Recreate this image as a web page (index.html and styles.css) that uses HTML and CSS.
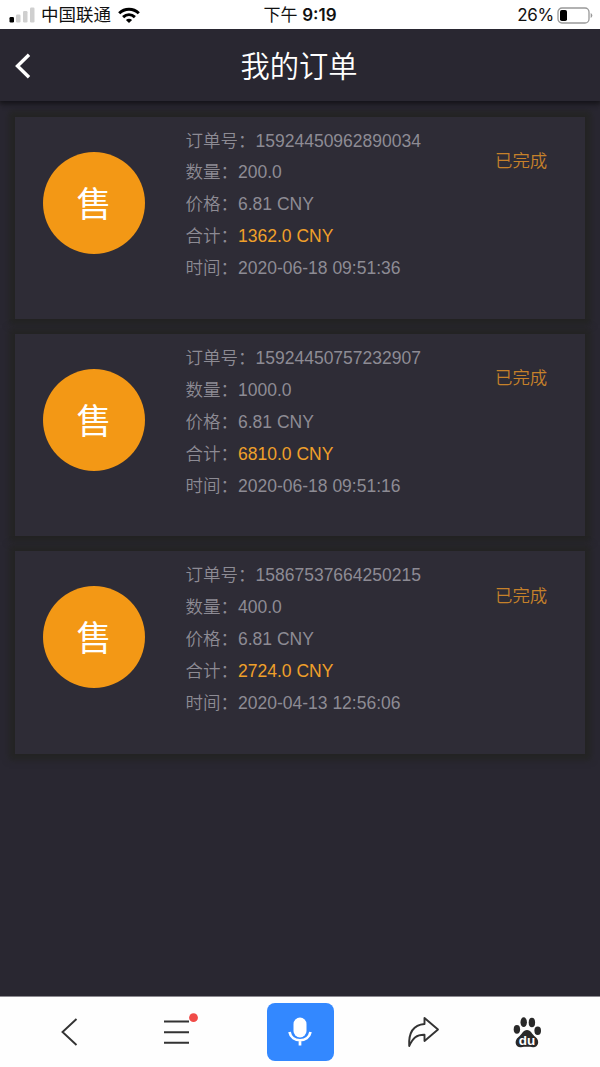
FILE: index.html
```html
<!DOCTYPE html>
<html lang="zh-CN">
<head>
<meta charset="utf-8">
<title>我的订单</title>
<link rel="stylesheet" href="styles.css">
</head>
<body>
<div class="statusbar">
  <div class="carrier">
    <svg class="signal" width="26" height="16" viewBox="0 0 26 16"><rect x="0.500" y="10" width="4.500" height="5.500" rx="1.200" fill="#000"/><g fill="#cfcfcf"><rect x="7" y="7.500" width="4.500" height="8" rx="1.200"/><rect x="14" y="4" width="4.500" height="11.500" rx="1.200"/><rect x="21" y="0.500" width="4.500" height="15" rx="1.200"/></g></svg>
    <span class="carrier-name">中国联通</span>
    <svg class="wifi" width="22" height="16" viewBox="0 0 22 16" fill="none" stroke="#000" stroke-width="3"><path d="M1.200 6.200C6.700 .8 15.300 .8 20.800 6.200"/><path d="M5.100 10.200c3.500-3.200 8.300-3.200 11.800 0"/><path d="M11 16l-3.100-3.100c1.800-1.700 4.400-1.700 6.200 0z" fill="#000" stroke="none"/></svg>
  </div>
  <div class="clock">下午 <b>9:19</b></div>
  <div class="power">
    <span class="percent">26%</span>
    <svg width="36" height="17" viewBox="0 0 36 17"><rect x="1" y="1" width="31" height="15" rx="4" fill="#fff" stroke="#999" stroke-width="1.300"/><rect x="3" y="3" width="7" height="11" rx="1.800" fill="#000"/><path d="M33.700 6v5q1.600-.7 1.600-2.500T33.700 6z" fill="#999"/></svg>
  </div>
</div>
<header class="header">
  <svg class="back" width="18" height="28" viewBox="0 0 18 28"><path d="M16 2.800 4.500 14 16 25.200" fill="none" stroke="#fff" stroke-width="3.400"/></svg>
  <h1 class="title">我的订单</h1>
</header>
<main class="orders">
  <article class="card">
    <div class="side"><div class="badge">售</div></div>
    <div class="details">
      <p>订单号：15924450962890034</p><p>数量：200.0</p><p>价格：6.81 CNY</p><p>合计：<span class="total">1362.0 CNY</span></p><p>时间：2020-06-18 09:51:36</p>
    </div>
    <div class="state">已完成</div>
  </article>
  <article class="card">
    <div class="side"><div class="badge">售</div></div>
    <div class="details">
      <p>订单号：15924450757232907</p><p>数量：1000.0</p><p>价格：6.81 CNY</p><p>合计：<span class="total">6810.0 CNY</span></p><p>时间：2020-06-18 09:51:16</p>
    </div>
    <div class="state">已完成</div>
  </article>
  <article class="card">
    <div class="side"><div class="badge">售</div></div>
    <div class="details">
      <p>订单号：15867537664250215</p><p>数量：400.0</p><p>价格：6.81 CNY</p><p>合计：<span class="total">2724.0 CNY</span></p><p>时间：2020-04-13 12:56:06</p>
    </div>
    <div class="state">已完成</div>
  </article>
</main>
<nav class="toolbar">
  <div class="tool"><svg width="36" height="36" viewBox="0 0 36 36"><path d="M25.500 5 11.500 18l14 13" fill="none" stroke="#333" stroke-width="1.900"/></svg></div>
  <div class="tool"><svg class="menu" width="40" height="36" viewBox="0 0 40 36"><path d="M7 7.500h25M7 18.200h25M7 28.800h25" fill="none" stroke="#333" stroke-width="1.900"/><circle cx="36.500" cy="3.700" r="4.400" fill="#f04b48"/></svg></div>
  <div class="tool"><div class="mic"><svg width="26" height="32" viewBox="0 0 26 32"><rect x="6.500" y="1.500" width="13" height="20" rx="6.500" fill="#fff"/><path d="M2.500 16C4.500 27 21.500 27 23.500 16M13 24v5.500" fill="none" stroke="#fff" stroke-width="2.700"/></svg></div></div>
  <div class="tool"><svg width="36" height="36" viewBox="0 0 36 36"><path d="M19.500 4 33 15.500 19.500 27v-6.300C11.500 20.500 8 24 4.200 32 3.500 19.500 8 11 19.500 10z" fill="none" stroke="#333" stroke-width="1.900" stroke-linejoin="round"/></svg></div>
  <div class="tool"><svg width="36" height="36" viewBox="0 0 36 36"><g fill="#292929"><ellipse cx="14.700" cy="8.200" rx="3.200" ry="4.900"/><ellipse cx="22.900" cy="8.500" rx="3.200" ry="4.800"/><ellipse cx="7.900" cy="15.300" rx="3.200" ry="4.400"/><ellipse cx="28.700" cy="16.700" rx="3.300" ry="4.200"/><path d="M18 16c4 0 5 4.500 8.500 7 5 4 2.500 10.600-2.500 10.200-4-.6-8-.6-12 0C6.500 33.600 4.500 27 9.500 23 13 20.500 14 16 18 16z"/></g><text x="18" y="31" class="paw-text">du</text></svg></div>
</nav>
</body>
</html>
```

FILE: styles.css
```css
* { box-sizing: border-box; }

body {
  margin: 0;
  height: 1067px;
  display: flex;
  flex-direction: column;
  background: #292731;
  overflow: hidden;
  font-family: "Liberation Sans", "Noto Sans CJK SC", sans-serif;
}

svg { display: block; flex: none; }

.statusbar {
  position: relative;
  z-index: 2;
  height: 29px;
  flex: none;
  display: grid;
  grid-template-columns: 1fr auto 1fr;
  align-items: center;
  padding: 1px 7px 0 9px;
  background: #fff;
  color: #111;
  font-family: Inter, "Noto Sans CJK SC", sans-serif;
  font-size: 17px;
  line-height: 26px;
  white-space: nowrap;
}
.carrier { display: flex; align-items: center; }
.carrier-name { margin: 0 7px 0 6px; font-size: 17.5px; }
.clock { margin-right: 2px; }
.clock b { font-weight: 600; }
.power { display: flex; justify-content: flex-end; align-items: center; gap: 3px; }
.percent { letter-spacing: -0.3px; }

.header {
  height: 72px;
  flex: none;
  display: grid;
  grid-template-columns: 60px 1fr 60px;
  align-items: center;
  background: #292731;
  color: #fff;
  box-shadow: 0 2px 5px 1px #141318;
  z-index: 1;
}
.back { margin: 1px 0 0 13px; }
.title {
  margin: 3px 2px 0 0;
  text-align: center;
  font-size: 29.3px;
  font-weight: 350;
  line-height: 40px;
}

.orders {
  flex: 1;
  display: flex;
  flex-direction: column;
  gap: 15px;
  padding: 15.5px 15px 0 14.5px;
}
.card {
  height: 202.4px;
  flex: none;
  display: grid;
  grid-template-columns: 171px 1fr 90px;
  background: #2e2c36;
  box-shadow: 0 0 6px 6px #242424;
}
.side { padding: 35px 0 0 28.5px; }
.badge {
  width: 102px;
  height: 102px;
  border-radius: 50%;
  background: #f39815;
  color: #fff;
  font-size: 35px;
  line-height: 105px;
  text-align: center;
}
.details {
  padding-top: 9px;
  color: #8d8b94;
  font-size: 17.5px;
  font-weight: 350;
  line-height: 31.9px;
  white-space: nowrap;
}
.details p { margin: 0; }
.total { color: #f0a02a; }
.state {
  padding-top: 32.5px;
  color: #c6812a;
  font-size: 17.4px;
  font-weight: 350;
  line-height: 24px;
}

.toolbar {
  height: 71px;
  flex: none;
  display: grid;
  grid-template-columns: 138px 78px 168px 78px 130px;
  background: #fefefe;
  border-top: 1px solid #8c8a90;
}
.tool {
  display: flex;
  justify-content: center;
  align-items: center;
}
.menu { overflow: visible; }
.mic {
  width: 67px;
  height: 58px;
  display: flex;
  justify-content: center;
  align-items: center;
  border-radius: 8px;
  background: #3388ff;
}
.paw-text {
  fill: #fff;
  font: 700 13.5px "Liberation Sans", sans-serif;
  text-anchor: middle;
}
```
